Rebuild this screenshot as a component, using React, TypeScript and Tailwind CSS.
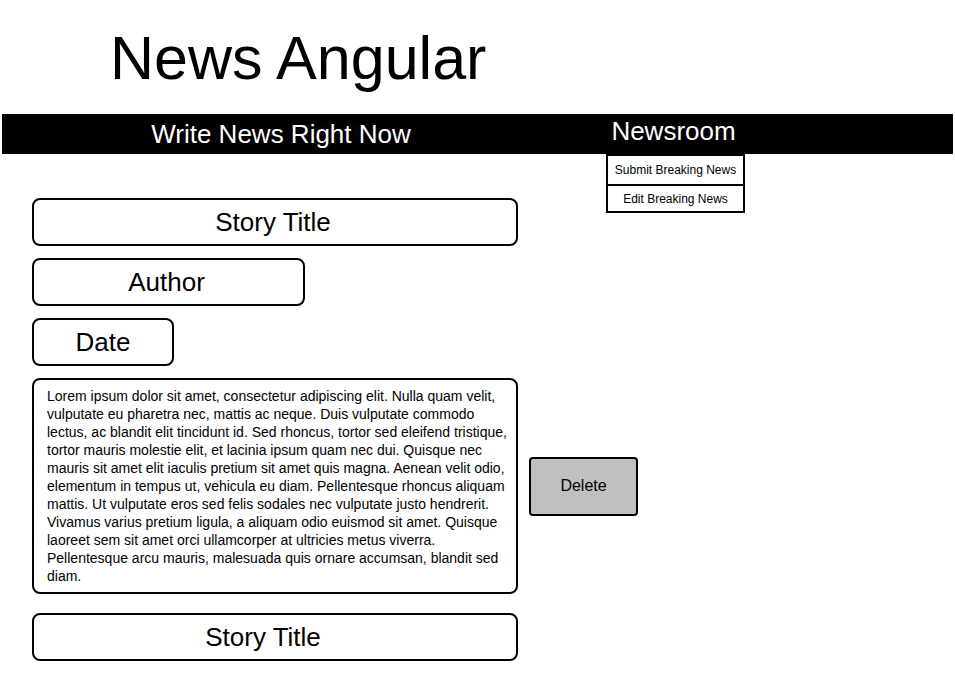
export default function App() {
  const lines = [
    "Lorem ipsum dolor sit amet, consectetur adipiscing elit. Nulla quam velit,",
    "vulputate eu pharetra nec, mattis ac neque. Duis vulputate commodo",
    "lectus, ac blandit elit tincidunt id. Sed rhoncus, tortor sed eleifend tristique,",
    "tortor mauris molestie elit, et lacinia ipsum quam nec dui. Quisque nec",
    "mauris sit amet elit iaculis pretium sit amet quis magna. Aenean velit odio,",
    "elementum in tempus ut, vehicula eu diam. Pellentesque rhoncus aliquam",
    "mattis. Ut vulputate eros sed felis sodales nec vulputate justo hendrerit.",
    "Vivamus varius pretium ligula, a aliquam odio euismod sit amet. Quisque",
    "laoreet sem sit amet orci ullamcorper at ultricies metus viverra.",
    "Pellentesque arcu mauris, malesuada quis ornare accumsan, blandit sed",
    "diam.",
  ];

  return (
    <div className="w-[955px] h-[673px] overflow-hidden bg-white text-black font-['Liberation_Sans',Arial,sans-serif]">
      {/* Titulo */}
      <h1 className="pl-[110px] pt-[28px] text-[61px] leading-[60px]">News Angular</h1>

      {/* Barra de navegacion */}
      <div className="mt-[26px] mx-[2px] h-[40px] bg-black flex text-white text-[26px] leading-[40px]">
        <div className="w-[558px] text-center">Write News Right Now</div>
        <div className="relative ml-[46px] w-[139px] text-center">
          <div className="-mt-[3px] pr-[4px]">Newsroom</div>
          <div className="absolute left-0 top-[40px] w-[139px] border-2 border-black bg-white text-black text-[12px] leading-none">
            <div className="h-[28px] flex items-center justify-center">Submit Breaking News</div>
            <div className="h-[27px] flex items-center justify-center border-t-2 border-black">Edit Breaking News</div>
          </div>
        </div>
      </div>

      {/* Formulario */}
      <div className="pl-[32px] mt-[44px] flex flex-col gap-[12px]">
        <div className="w-[486px] h-[48px] border-2 border-black rounded-[8px] flex items-center justify-center text-[26px] pr-[4px]">
          Story Title
        </div>
        <div className="w-[273px] h-[48px] border-2 border-black rounded-[8px] flex items-center justify-center text-[26px] pr-[4px]">
          Author
        </div>
        <div className="w-[142px] h-[48px] border-2 border-black rounded-[8px] flex items-center justify-center text-[26px]">
          Date
        </div>
        <div className="flex items-center gap-[11px]">
          <div className="w-[486px] h-[216px] border-2 border-black rounded-[8px] pl-[13px] pt-[7px] text-[14px] leading-[18px]">
            {lines.map((l) => (
              <div key={l} className="whitespace-nowrap">{l}</div>
            ))}
          </div>
          <button className="w-[109px] h-[59px] bg-[#c0c0c0] border-2 border-black rounded-[4px] text-[16px]">
            Delete
          </button>
        </div>
        <div className="mt-[7px] w-[486px] h-[48px] border-2 border-black rounded-[8px] flex items-center justify-center text-[26px] pr-[24px]">
          Story Title
        </div>
      </div>
    </div>
  );
}
